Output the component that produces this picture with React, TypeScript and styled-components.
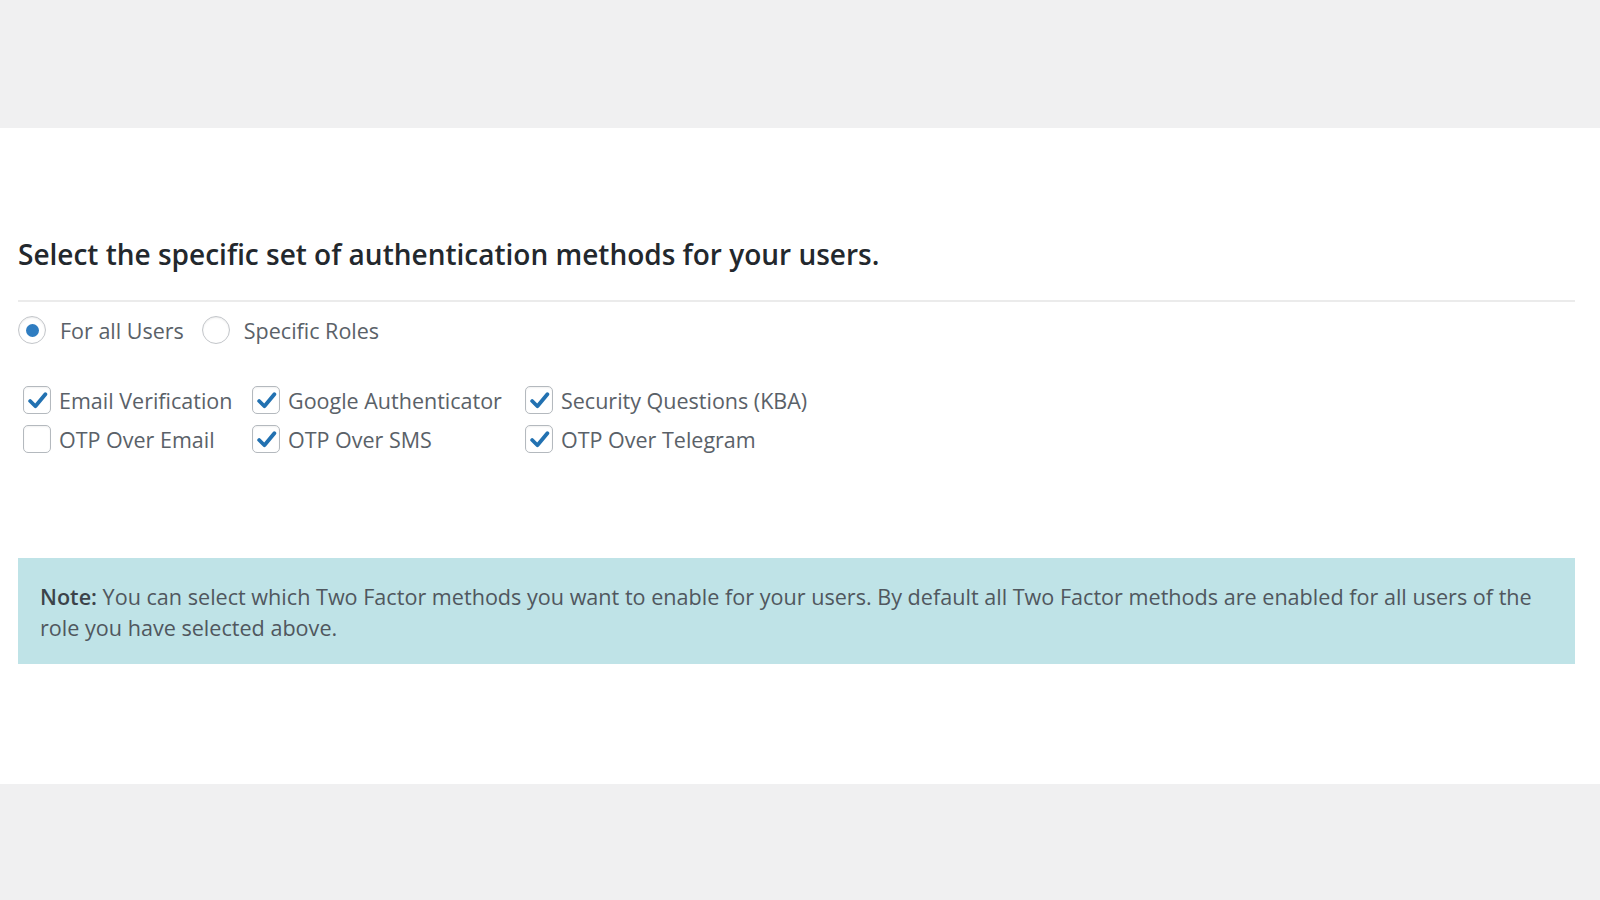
import React from "react";
import styled, { createGlobalStyle } from "styled-components";

const Global = createGlobalStyle`
  html, body { margin: 0; padding: 0; background: #f0f0f1; }
  body { font-family: "Open Sans", "Noto Sans", Arial, sans-serif; }
  * { box-sizing: border-box; }
`;

const Page = styled.div`
  width: 1600px;
  height: 900px;
  display: flex;
  flex-direction: column;
  background: #f0f0f1;
`;

const TopBand = styled.div`
  height: 128px;
  flex: none;
`;

const Panel = styled.section`
  height: 656px;
  flex: none;
  background: #ffffff;
  padding: 108px 25px 0 18px;
  display: flex;
  flex-direction: column;
`;

const Heading = styled.h2`
  margin: 0;
  padding-bottom: 28px;
  border-bottom: 2px solid #ebebeb;
  font-size: 28px;
  line-height: 36px;
  font-weight: 600;
  letter-spacing: 0;
  color: #23282d;
`;

const RadioRow = styled.div`
  margin-top: 14px;
  display: flex;
  align-items: center;
  height: 28px;
`;

const RadioLabel = styled.label`
  display: flex;
  align-items: center;
  gap: 14px;
  margin-right: 18px;
  font-size: 21.5px;
  color: #5a6168;
`;

const RadioCircle = styled.span<{ $on?: boolean }>`
  width: 28px;
  height: 28px;
  border-radius: 50%;
  border: 1.5px solid #c3c6ca;
  background: #fff;
  display: flex;
  align-items: center;
  justify-content: center;
  flex: none;
  box-shadow: inset 0 1px 2px rgba(0, 0, 0, 0.08);
  &::after {
    content: "";
    width: 13px;
    height: 13px;
    border-radius: 50%;
    background: ${(p) => (p.$on ? "#2f7dc1" : "transparent")};
  }
`;

const MethodGrid = styled.div`
  margin-top: 41px;
  padding-left: 5px;
  display: grid;
  grid-template-columns: 229px 273px auto;
  grid-auto-rows: 30px;
  row-gap: 9px;
  justify-content: start;
`;

const Method = styled.label`
  display: flex;
  align-items: center;
  gap: 8px;
  font-size: 21.5px;
  color: #5a6168;
  white-space: nowrap;
`;

const Box = styled.span`
  width: 28px;
  height: 28px;
  border: 1.5px solid #b4b9be;
  border-radius: 5px;
  background: #fff;
  display: flex;
  align-items: center;
  justify-content: center;
  flex: none;
  box-shadow: inset 0 1px 2px rgba(0, 0, 0, 0.06);
`;

const Note = styled.div`
  margin-top: 104px;
  background: #bfe3e7;
  padding: 23px 20px 21px 22px;
  font-size: 21.6px;
  line-height: 31px;
  color: #50575e;
`;

const NoteLabel = styled.strong`
  font-weight: 600;
  color: #3c434a;
`;

const Check = () => (
  <svg width="21" height="19" viewBox="0 0 20 18" aria-hidden>
    <path
      d="M3 9.5 L8 14.5 L17.5 3"
      fill="none"
      stroke="#2271b1"
      strokeWidth="3.6"
      strokeLinecap="round"
      strokeLinejoin="round"
    />
  </svg>
);

const methods: { label: string; on: boolean }[] = [
  { label: "Email Verification", on: true },
  { label: "Google Authenticator", on: true },
  { label: "Security Questions (KBA)", on: true },
  { label: "OTP Over Email", on: false },
  { label: "OTP Over SMS", on: true },
  { label: "OTP Over Telegram", on: true },
];

export default function App() {
  return (
    <>
      <Global />
      <Page>
        <TopBand />
        <Panel>
          <Heading>Select the specific set of authentication methods for your users.</Heading>
          <RadioRow>
            <RadioLabel>
              <RadioCircle $on />
              For all Users
            </RadioLabel>
            <RadioLabel>
              <RadioCircle />
              Specific Roles
            </RadioLabel>
          </RadioRow>
          <MethodGrid>
            {methods.map((m) => (
              <Method key={m.label}>
                <Box>{m.on && <Check />}</Box>
                {m.label}
              </Method>
            ))}
          </MethodGrid>
          <Note>
            <NoteLabel>Note:</NoteLabel> You can select which Two Factor methods you want to enable for
            your users. By default all Two Factor methods are enabled for all users of the role you have
            selected above.
          </Note>
        </Panel>
      </Page>
    </>
  );
}
